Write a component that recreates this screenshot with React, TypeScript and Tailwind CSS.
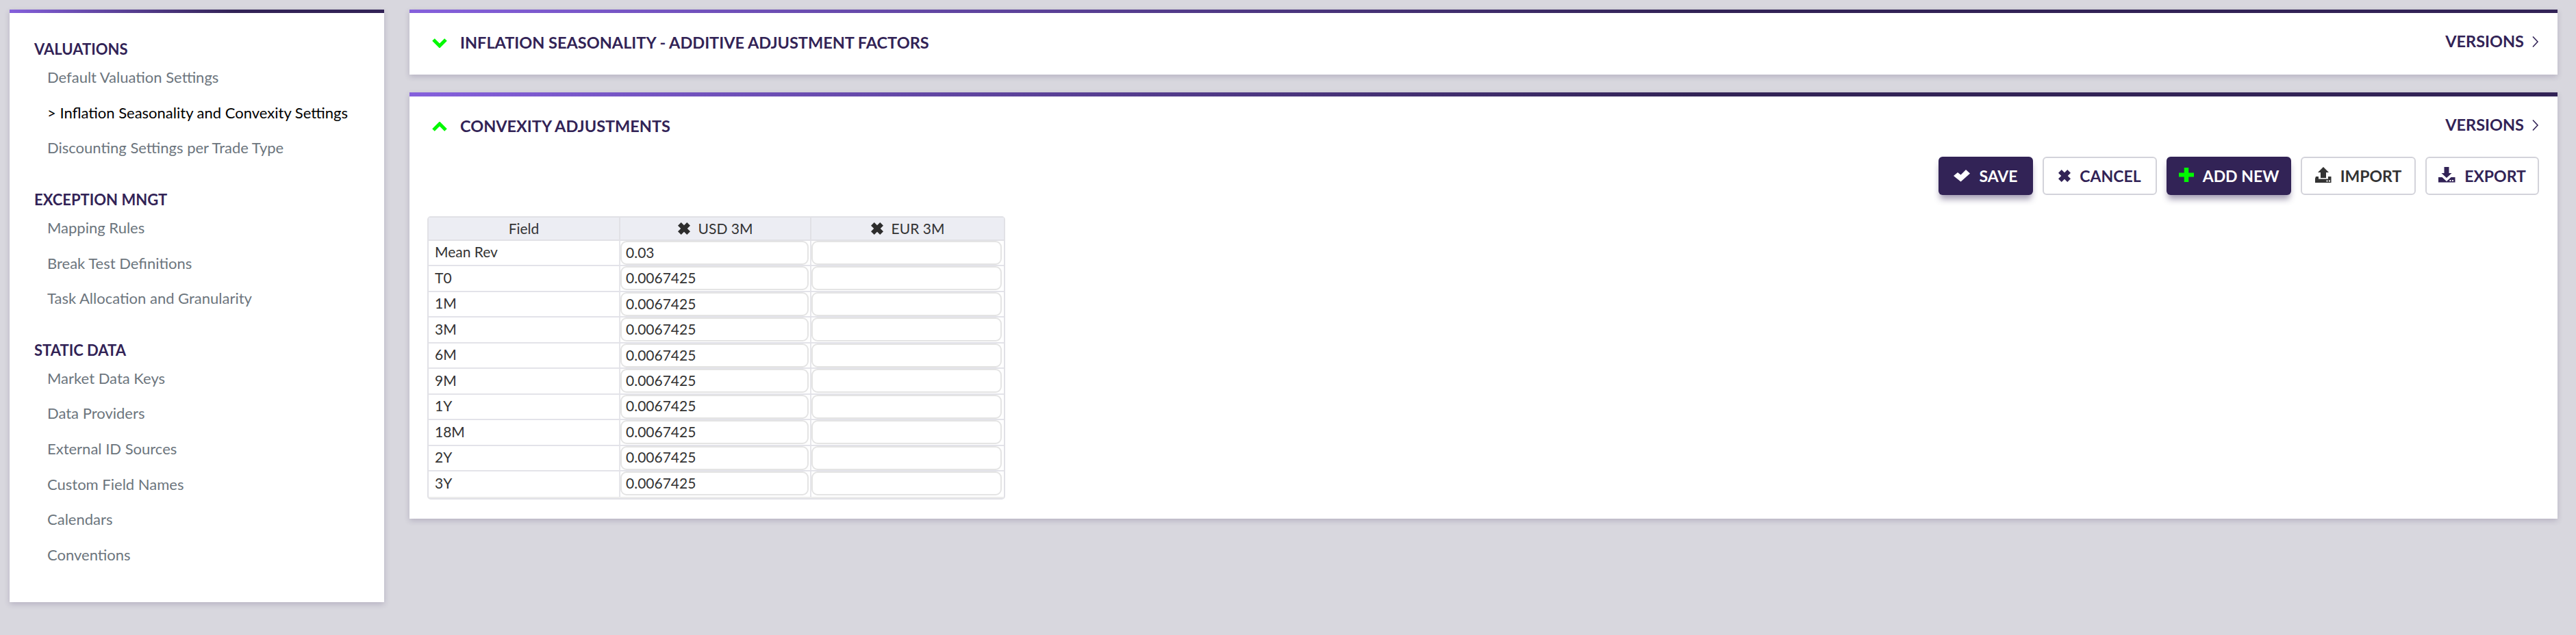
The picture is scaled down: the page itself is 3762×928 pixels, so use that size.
const font = "font-['Lato',sans-serif]";

const sections = [
  {
    title: "VALUATIONS",
    items: ["Default Valuation Settings", "> Inflation Seasonality and Convexity Settings", "Discounting Settings per Trade Type"],
  },
  { title: "EXCEPTION MNGT", items: ["Mapping Rules", "Break Test Definitions", "Task Allocation and Granularity"] },
  {
    title: "STATIC DATA",
    items: ["Market Data Keys", "Data Providers", "External ID Sources", "Custom Field Names", "Calendars", "Conventions"],
  },
];

const rows = [
  ["Mean Rev", "0.03"],
  ["T0", "0.0067425"],
  ["1M", "0.0067425"],
  ["3M", "0.0067425"],
  ["6M", "0.0067425"],
  ["9M", "0.0067425"],
  ["1Y", "0.0067425"],
  ["18M", "0.0067425"],
  ["2Y", "0.0067425"],
  ["3Y", "0.0067425"],
];

const TopBar = ({ className }: { className: string }) => (
  <div className={`bg-linear-to-r from-[#8560dc] to-[#322356] to-60% ${className}`} />
);

const Chevron = ({ up }: { up?: boolean }) => (
  <svg width="24" height="14" viewBox="0 0 24 14" className="shrink-0">
    <polyline
      points={up ? "3,12 12,3 21,12" : "3,2 12,11 21,2"}
      fill="none"
      stroke="#00f900"
      strokeWidth="5"
    />
  </svg>
);

const Versions = () => (
  <div className="ml-auto mb-[4px] flex items-center gap-[11px] text-[23.5px] font-bold text-[#322356]">
    VERSIONS
    <svg width="11" height="18" viewBox="0 0 11 18">
      <polyline points="2,1.5 9,9 2,16.5" fill="none" stroke="#322356" strokeWidth="1.6" />
    </svg>
  </div>
);

const CheckIcon = () => (
  <svg width="24" height="18" viewBox="0 0 24 18">
    <path d="M0 9 L6 4 L10.5 7.5 L18 0 L24 5.5 L10.5 17.5 Z" fill="#fff" />
  </svg>
);

const CrossIcon = ({ color }: { color: string }) => (
  <svg width="18" height="18" viewBox="0 0 19 19">
    <path
      d="M5 0 L9.5 4.5 L14 0 L19 5 L14.5 9.5 L19 14 L14 19 L9.5 14.5 L5 19 L0 14 L4.5 9.5 L0 5 Z"
      fill={color}
    />
  </svg>
);

const PlusIcon = () => (
  <svg width="22" height="21" viewBox="0 0 22 21" className="mb-[4px]">
    <path d="M7.75 0 H14.25 V7.5 H22 V13.5 H14.25 V21 H7.75 V13.5 H0 V7.5 H7.75 Z" fill="#00f900" />
  </svg>
);

const ImportIcon = () => (
  <svg width="24" height="23" viewBox="0 0 24 23" className="mb-[4px]">
    <path d="M12 0 L20 8 H16 V16 H8 V8 H4 Z" fill="#333" />
    <path d="M1 14 H5 V17.5 H19 V14 H23.5 V23 H0 V17 Z" fill="#333" />
    <rect x="16.5" y="19.5" width="2" height="2" fill="#fff" />
    <rect x="20" y="19.5" width="2" height="2" fill="#fff" />
  </svg>
);

const ExportIcon = () => (
  <svg width="25" height="23" viewBox="0 0 25 23" className="mb-[4px]">
    <path d="M8.5 0 H15.5 V9 H19.5 L12 16 L4.5 9 H8.5 Z" fill="#322356" />
    <path d="M0 15 H5.5 L12 21 L18.5 15 H24.5 V22.5 H0 Z" fill="#322356" />
    <rect x="16.5" y="19" width="2" height="2" fill="#fff" />
    <rect x="20" y="19" width="2" height="2" fill="#fff" />
  </svg>
);

const Button = ({
  label,
  icon,
  width,
  primary,
  color,
}: {
  label: string;
  icon: React.ReactNode;
  width: string;
  primary?: boolean;
  color?: string;
}) => (
  <div
    className={`flex h-[56px] items-center justify-center gap-[13px] rounded-[6px] text-[23px] font-bold ${width} ${
      primary
        ? "bg-[#322356] text-white shadow-[0_8px_10px_-2px_rgba(50,35,86,0.45)]"
        : "border-2 border-[#d3d3da] bg-white"
    } ${color ?? ""}`}
  >
    {icon}
    {label}
  </div>
);

const Table = () => (
  <div className="w-[844px] rounded-[5px] border-2 border-[#e1e1e6] text-[21px] text-[#333]">
    <div className="box-content flex h-[32px] border-b-2 border-[#e1e1e6] bg-[#ecedf3]">
      <div className="flex w-[280px] items-center justify-center border-r-2 border-[#e1e1e6]">Field</div>
      <div className="flex w-[279px] items-center justify-center gap-[12px] border-r-2 border-[#e1e1e6]">
        <CrossIcon color="#2d2d2d" />
        USD 3M
      </div>
      <div className="flex flex-1 items-center justify-center gap-[12px]">
        <CrossIcon color="#2d2d2d" />
        EUR 3M
      </div>
    </div>
    {rows.map(([name, value], i) => (
      <div key={name} className={`flex h-[37.44px] ${i < rows.length - 1 ? "border-b-2 border-[#e3e3e9]" : ""}`}>
        <div className="flex w-[280px] items-center border-r-2 border-[#e6e6ea] pb-[3px] pl-[9px]">{name}</div>
        <div className="w-[279px] border-r-2 border-[#e6e6ea] pr-[2px]">
          <div className="flex h-[35px] items-center rounded-[9px] border-2 border-[#e4e4e4] pb-[2px] pl-[6px]">{value}</div>
        </div>
        <div className="flex-1 pr-[3px]">
          <div className="h-[35px] rounded-[9px] border-2 border-[#e4e4e4]" />
        </div>
      </div>
    ))}
    <div className="h-[2px] bg-[#ececec]" />
  </div>
);

const PanelHeader = ({ title, up }: { title: string; up?: boolean }) => (
  <div className="flex h-[88px] items-center pl-[32px] pr-[27px]">
    <Chevron up={up} />
    <h2 className="ml-[18px] text-[23.5px] font-bold text-[#322356]">{title}</h2>
    <Versions />
  </div>
);

export default function App() {
  return (
    <div className={`flex min-h-screen items-start gap-[37px] bg-[#d8d7de] pl-[14px] pt-[14px] ${font}`}>
      <aside className="h-[866px] w-[547px] shrink-0 bg-white shadow-[0_3px_8px_rgba(50,35,86,0.2)]">
        <TopBar className="h-[5px]" />
        <div className="flex flex-col gap-[38px] pl-[36px] pt-[41px]">
          {sections.map((section) => (
            <div key={section.title}>
              <h3 className="h-[24px] text-[22px] leading-[24px] font-bold text-[#322356]">{section.title}</h3>
              <ul className="mt-[3px] pl-[19px]">
                {section.items.map((item) => (
                  <li
                    key={item}
                    className={`flex h-[51.6px] items-center text-[22px] ${
                      item.startsWith(">") ? "text-black" : "text-[#6c757d]"
                    }`}
                  >
                    {item}
                  </li>
                ))}
              </ul>
            </div>
          ))}
        </div>
      </aside>

      <main className="flex w-[3137px] shrink-0 flex-col gap-[26px]">
        <section className="h-[95px] bg-white shadow-[0_3px_8px_rgba(50,35,86,0.2)]">
          <TopBar className="h-[5px]" />
          <PanelHeader title="INFLATION SEASONALITY - ADDITIVE ADJUSTMENT FACTORS" />
        </section>

        <section className="h-[623px] bg-white shadow-[0_3px_8px_rgba(50,35,86,0.2)]">
          <TopBar className="h-[6px]" />
          <PanelHeader title="CONVEXITY ADJUSTMENTS" up />
          <div className="flex justify-end gap-[14px] pr-[27px]">
            <Button label="SAVE" icon={<CheckIcon />} width="w-[138px]" primary />
            <Button label="CANCEL" icon={<CrossIcon color="#322356" />} width="w-[167px]" color="text-[#322356]" />
            <Button label="ADD NEW" icon={<PlusIcon />} width="w-[182px]" primary />
            <Button label="IMPORT" icon={<ImportIcon />} width="w-[168px]" color="text-[#333]" />
            <Button label="EXPORT" icon={<ExportIcon />} width="w-[166px]" color="text-[#322356]" />
          </div>
          <div className="mt-[31px] pl-[26px]">
            <Table />
          </div>
        </section>
      </main>
    </div>
  );
}
